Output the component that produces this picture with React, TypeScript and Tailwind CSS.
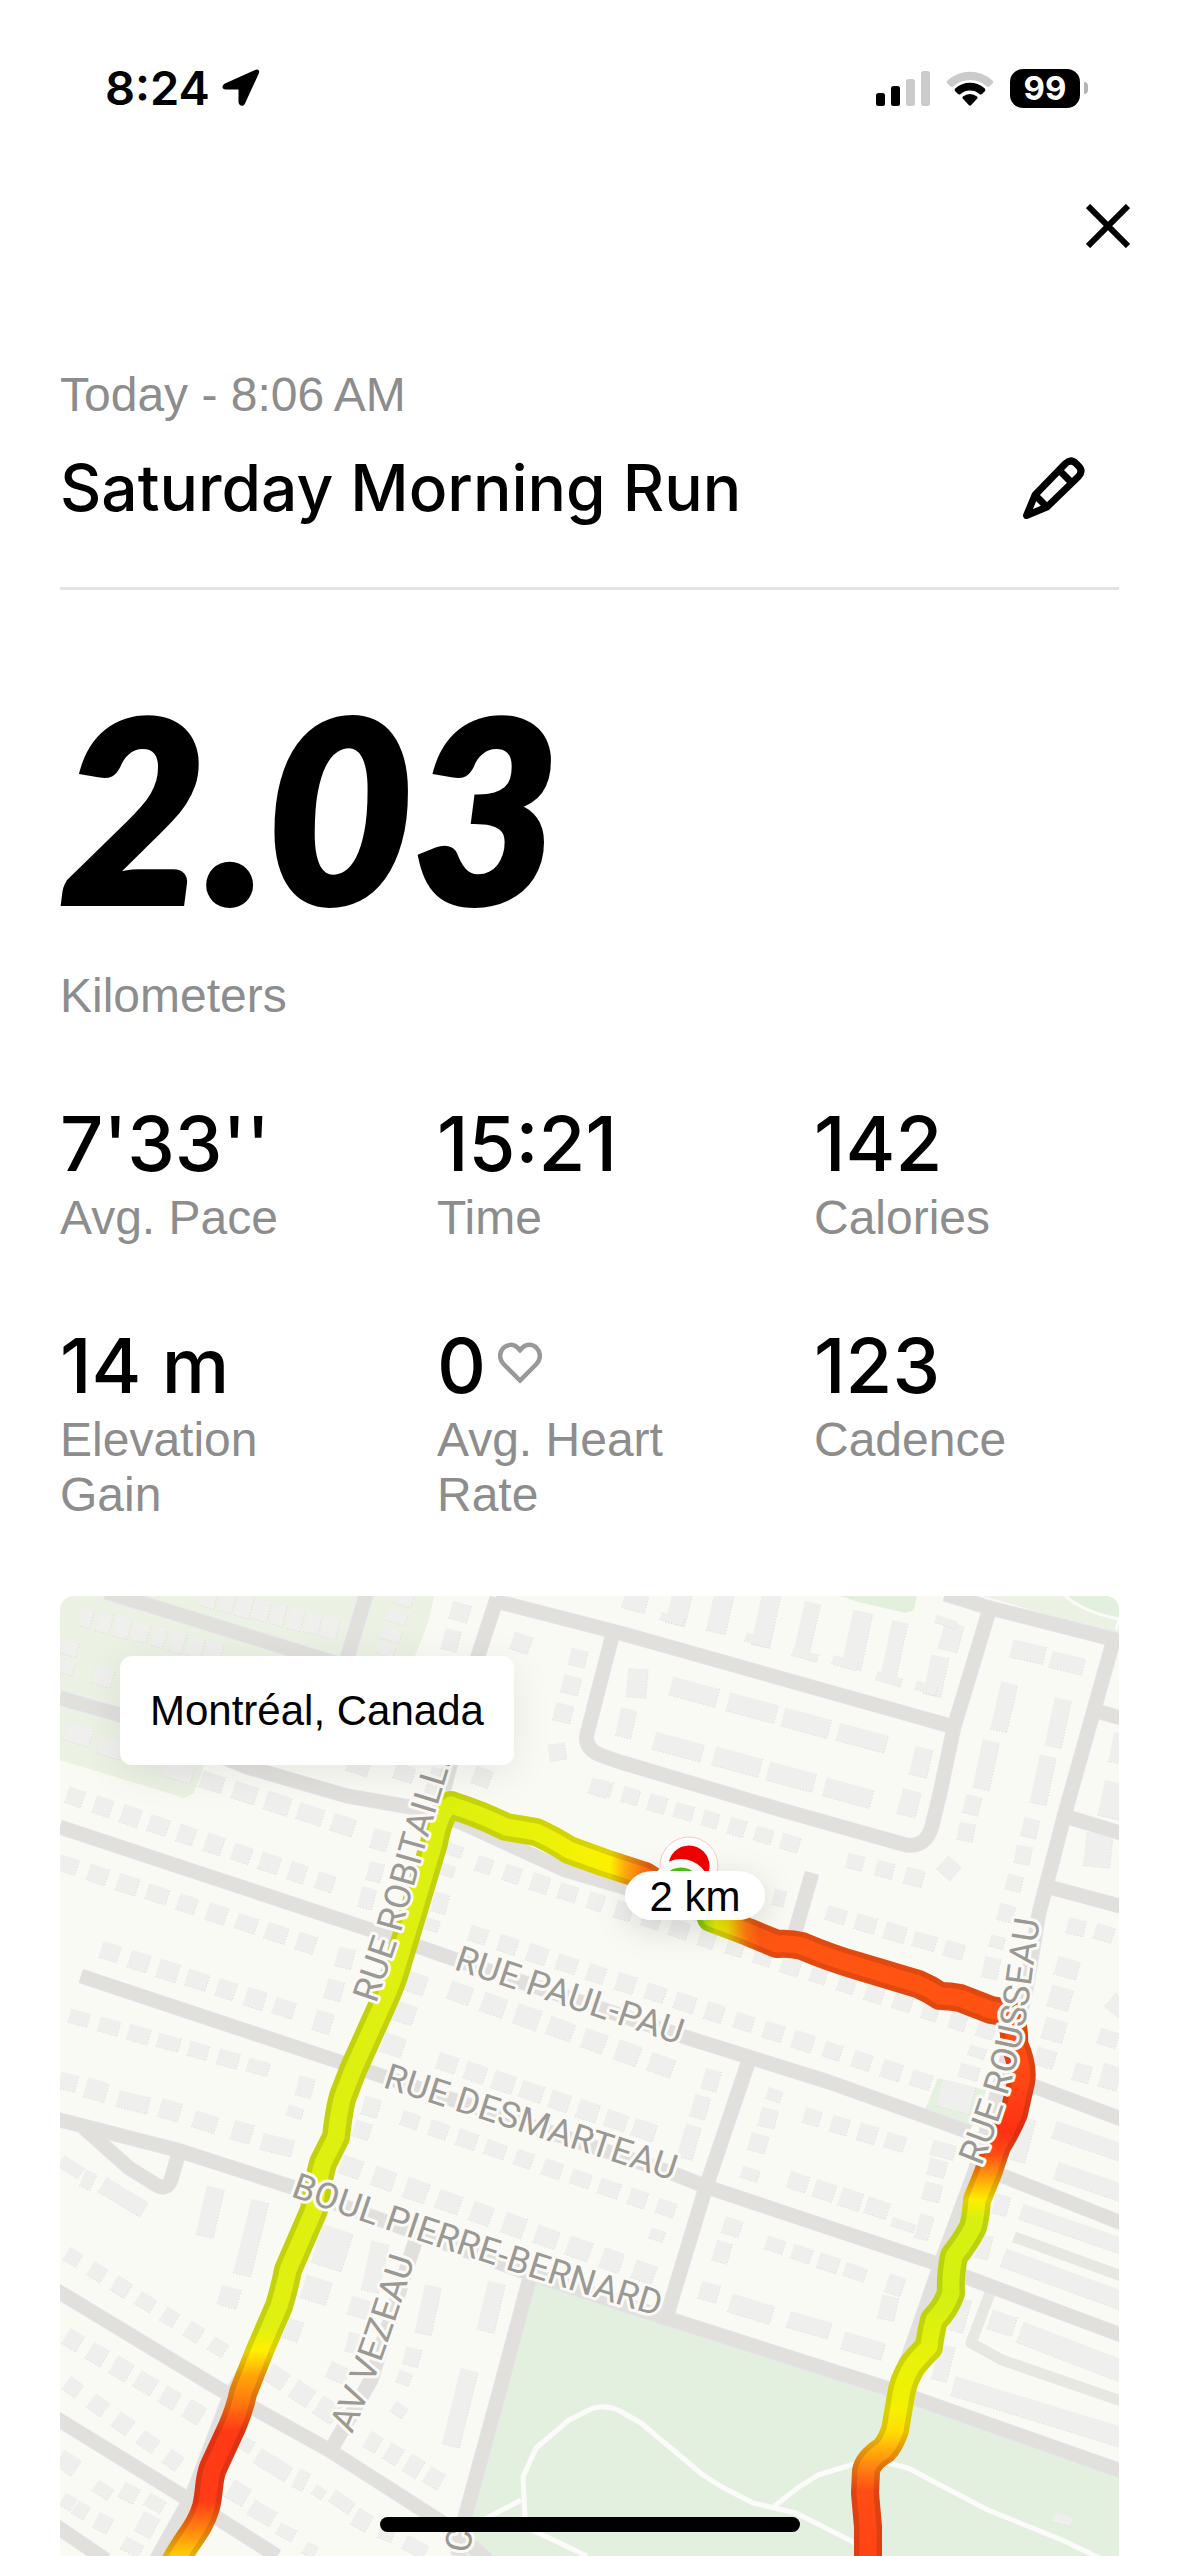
import type { ReactNode } from "react";

type Building = [cx: number, cy: number, w: number, h: number, angle: number];
type Row = [x1: number, y1: number, x2: number, y2: number, count: number, w: number, h: number];

const rows: Row[] = [
  [150, 2, 270, 32, 8, 14, 21],
  [26, 22, 154, 56, 8, 14, 20],
  [152, 186, 283, 229, 5, 24, 18],
  [15, 201, 265, 286, 10, 18, 18],
  [8, 269, 246, 347, 9, 20, 17],
  [50, 356, 224, 412, 7, 20, 18],
  [19, 422, 198, 471, 7, 21, 15],
  [424, 269, 926, 434, 19, 17, 17],
  [418, 339, 861, 484, 16, 19, 17],
  [400, 397, 601, 469, 7, 24, 20],
  [387, 467, 584, 534, 8, 21, 18],
  [350, 524, 606, 612, 10, 19, 16],
  [291, 571, 584, 676, 10, 22, 20],
  [217, 781, 267, 814, 3, 21, 20],
  [313, 846, 374, 882, 4, 15, 19],
  [13, 661, 158, 751, 7, 16, 16],
  [13, 744, 134, 816, 6, 18, 19],
  [13, 791, 113, 864, 5, 17, 17],
  [544, 192, 730, 247, 8, 17, 16],
  [795, 266, 854, 281, 3, 18, 16],
  [776, 319, 894, 354, 5, 21, 16],
  [752, 521, 835, 546, 4, 18, 17],
  [738, 586, 817, 612, 4, 21, 18],
  [715, 649, 795, 676, 4, 20, 15],
];

const buildings: Building[] = [
  [8, 52, 20, 14, 17], [6, 71, 16, 14, 17], [43, 81, 20, 18, 17],
  [19, 139, 26, 18, 17], [50, 152, 24, 18, 17], [119, 176, 28, 17, 17],
  [344, 4, 18, 12, 18], [337, 21, 20, 13, 18], [331, 39, 20, 12, 18], [326, 54, 18, 12, 18],
  [400, 16, 19, 18, 16], [391, 44, 16, 21, 14], [461, 47, 19, 18, 20],
  [518, 62, 17, 17, 14], [511, 89, 18, 18, 14], [503, 117, 18, 18, 14],
  [497, 156, 17, 17, -8], [422, 181, 18, 18, 20], [539, 192, 19, 16, 18],
  [320, 244, 17, 20, 16], [298, 171, 22, 14, 18], [344, 177, 20, 16, 18],
  [376, 182, 14, 20, 16], [372, 197, 16, 10, 16],
  [315, 276, 15, 19, 14], [307, 302, 15, 21, 14], [285, 362, 17, 20, 14],
  [274, 394, 17, 20, 16], [263, 426, 18, 21, 16],
  [394, 254, 17, 12, 18], [387, 274, 15, 12, 18], [380, 307, 15, 20, 14],
  [372, 329, 14, 12, 16], [355, 387, 22, 20, 18], [344, 417, 22, 20, 18], [333, 449, 22, 20, 18],
  [651, 484, 16, 21, 16], [640, 511, 16, 23, 16], [629, 546, 16, 34, 16],
  [311, 511, 17, 19, 16], [302, 534, 17, 17, 18], [597, 639, 15, 11, 18],
  [272, 652, 32, 40, 18], [256, 694, 27, 24, 18], [233, 734, 16, 21, 20],
  [315, 671, 18, 50, 12], [300, 712, 22, 19, 16], [294, 747, 15, 20, 14],
  [278, 777, 21, 17, 24], [368, 714, 17, 49, 12], [431, 711, 18, 50, 13],
  [352, 761, 16, 18, 14], [344, 782, 14, 13, 20], [400, 812, 18, 78, 14], [339, 814, 14, 12, 35],
  [8, 486, 18, 17, 14], [36, 494, 22, 20, 16], [73, 506, 32, 17, 14], [110, 514, 21, 19, 16],
  [145, 526, 24, 17, 18], [182, 536, 20, 20, 16], [217, 549, 32, 17, 14],
  [245, 491, 16, 20, 14], [235, 516, 16, 11, 18],
  [11, 571, 24, 13, 32], [28, 584, 12, 18, 24], [63, 601, 49, 17, 31],
  [150, 616, 18, 50, 13], [191, 642, 18, 76, 14], [169, 701, 20, 20, 16],
  [8, 867, 20, 19, 34], [43, 894, 18, 13, 34], [69, 897, 17, 17, 28], [95, 907, 19, 14, 30],
  [8, 906, 13, 14, 30], [21, 914, 14, 15, 32], [43, 927, 16, 17, 28], [72, 951, 20, 14, 28],
  [87, 929, 18, 22, 28], [187, 849, 12, 13, 30], [213, 869, 37, 17, 32], [241, 884, 12, 20, 26],
  [259, 896, 12, 11, 34], [282, 906, 24, 14, 34], [302, 924, 17, 19, 30], [178, 897, 20, 20, 30],
  [202, 917, 26, 17, 30], [226, 936, 18, 13, 28], [250, 954, 12, 13, 30], [355, 951, 24, 15, 28],
  [326, 938, 15, 13, 20],
  [575, 6, 24, 18, 15], [619, 12, 20, 34, 14], [612, 23, 24, 8, 16], [660, 17, 20, 40, 13],
  [706, 24, 19, 54, 12], [697, 44, 24, 9, 17], [747, 32, 16, 52, 13], [745, 59, 26, 8, 16],
  [797, 44, 20, 58, 12], [785, 67, 26, 9, 16], [834, 54, 16, 58, 12], [829, 83, 26, 9, 16],
  [876, 80, 18, 40, 12], [866, 92, 22, 9, 18], [891, 41, 20, 28, 15], [886, 26, 22, 8, 18],
  [968, 56, 34, 18, 13], [1007, 67, 34, 17, 14], [944, 111, 17, 49, 13], [998, 127, 17, 49, 12],
  [926, 169, 17, 49, 12], [983, 184, 17, 49, 12], [912, 209, 16, 19, 14], [906, 236, 16, 18, 10],
  [970, 232, 16, 19, 14], [963, 259, 16, 18, 10], [954, 287, 16, 16, 14], [946, 317, 16, 17, 14],
  [937, 346, 15, 12, 16], [931, 372, 16, 21, 12], [889, 272, 18, 18, 42],
  [577, 87, 20, 29, 5], [566, 127, 16, 29, 12],
  [634, 96, 48, 19, 15], [692, 112, 50, 19, 15], [746, 127, 48, 19, 15], [802, 142, 50, 18, 15],
  [618, 151, 50, 18, 15], [677, 166, 48, 19, 15], [731, 181, 48, 19, 15], [788, 197, 49, 19, 15],
  [861, 166, 18, 29, 13], [849, 207, 19, 26, 14], [719, 302, 12, 16, 14],
  [1057, 152, 12, 30, 12], [1052, 204, 22, 36, 12], [1038, 254, 27, 34, 6],
  [1016, 331, 18, 16, 14], [1044, 337, 19, 16, 18], [1007, 372, 23, 19, 16], [1000, 402, 22, 22, 16],
  [994, 434, 22, 22, 16], [1048, 442, 19, 16, 18], [985, 462, 20, 18, 18], [1022, 477, 17, 18, 16],
  [1050, 481, 19, 24, 16], [1057, 409, 18, 18, 40], [917, 456, 17, 11, 18], [909, 476, 20, 14, 16],
  [714, 499, 15, 12, 20], [708, 522, 17, 19, 14], [698, 547, 18, 18, 16], [690, 578, 18, 12, 18],
  [883, 554, 24, 15, 16], [877, 572, 18, 17, 14], [872, 596, 18, 18, 14], [843, 629, 24, 9, 18],
  [864, 631, 14, 25, 16], [672, 631, 18, 17, 18], [662, 656, 16, 21, 16], [835, 689, 17, 19, 18],
  [828, 712, 17, 24, 12], [649, 696, 19, 18, 16], [691, 713, 44, 19, 17], [749, 729, 43, 17, 16],
  [803, 750, 42, 18, 16], [896, 501, 34, 27, 14], [1028, 545, 72, 18, 19], [1030, 586, 72, 18, 19],
  [1012, 633, 108, 16, 19], [1005, 684, 132, 19, 20], [942, 727, 26, 20, 18],
  [1012, 756, 112, 22, 21], [982, 817, 186, 20, 17], [941, 609, 15, 20, 14], [924, 651, 13, 24, 14],
  [900, 719, 15, 34, 16], [883, 767, 16, 36, 14], [963, 544, 15, 44, 14], [1003, 924, 19, 9, 14],
];

const roads: string[] = [
  "M46 -4 L269 65 L405 105",
  "M307 -4 L286 66",
  "M437 2 L418 60 L390 170 L345 340 L293 470 L272 540 L212 725 L168 805 L132 900 L96 964",
  "M0 102 L60 119 L187 171 L287 200 L350 211 L400 226 L505 274 L560 290 L720 346 L945 412",
  "M0 231 L320 337 L391 362 L625 441 L769 486 L909 536",
  "M21 380 L280 466 L313 477 L612 577 L647 591 L872 666 L906 681 L1064 740",
  "M-4 523 L117 554 L232 591 L313 621 L468 677 L603 721 L826 792 L1064 876",
  "M24 532 L69 572 L98 590 Q107 594 111 584 L119 556",
  "M355 646 L311 784 L272 852",
  "M470 681 L439 797 L405 921 L398 960",
  "M-4 694 L161 794 L269 854 L383 927 L428 964",
  "M-4 822 L121 899 L217 960",
  "M-4 930 L46 964",
  "M435 5 L560 37 L894 131",
  "M930 12 L894 131 L880 197 L872 230 Q866 252 846 249 L725 215 L560 166 L540 159 Q524 152 527 138 L553 37",
  "M885 -2 L930 12 L1064 46",
  "M1053 46 L1005 217 L979 317 L965 400 L935 505 L915 575 L882 664 L840 785 L836 792",
  "M1040 116 L1064 123",
  "M1011 222 L1064 238",
  "M989 291 L1064 311",
  "M752 277 L734 340",
  "M688 467 L645 594 L607 719",
  "M968 488 L1064 524",
  "M938 578 L1064 628",
];

const leftLeg =
  "M115 966 C128 942 140 932 146 911 C150 895 148 885 153 872 L172 831 Q180 812 183 797 L200 754 L219 710 Q225 690 228 674 L254 614 Q258 585 263 567 L276 541 Q280 505 285 495 L293 474 L320 414 Q331 390 335 377 L357 304 L374 247 Q380 215 391 209";
const topFirst = "M391 209 Q420 218 446 231 Q460 233 476 236 Q492 243 509 254 L545 267 L585 280 L610 296";
const topSecond =
  "M651 322 L688 336 L717 348 Q730 347 742 350 Q770 362 798 370 L858 388 Q870 393 880 400 Q890 400 900 402 L931 414 L950 417";
const rightLeg =
  "M950 417 Q955 435 954 448 Q964 470 961 486 L954 517 Q948 532 937 550 L928 577 L917 604 Q916 620 913 631 Q906 645 894 660 Q890 680 891 697 Q886 712 874 724 Q870 740 869 751 Q858 762 852 770 Q843 785 841 799 L835 834 Q830 848 824 854 Q808 864 806 875 L805 897 L808 931 L808 966";

const segments = [
  { d: leftLeg, stroke: "url(#paceLeft)" },
  { d: topFirst, stroke: "url(#paceTop)" },
  { d: topSecond, stroke: "url(#paceTop)" },
  { d: rightLeg, stroke: "url(#paceRight)" },
];

const leftStops: [number, string][] = [
  [200, "#dcf00f"], [730, "#e0f010"], [755, "#fff000"], [780, "#ffa408"], [806, "#ff7a10"],
  [835, "#ff3a15"], [905, "#ff3c16"], [932, "#ff8010"], [960, "#ffd008"],
];
const topStops: [number, string][] = [
  [391, "#dcf00f"], [480, "#eaf208"], [550, "#fdf000"], [566, "#ffa80c"], [590, "#ff6412"],
  [640, "#9adf10"], [656, "#ecf008"], [668, "#f4dc04"], [686, "#ff7a12"], [700, "#ff5512"], [950, "#ff5212"],
];
const rightStops: [number, string][] = [
  [417, "#ff5212"], [490, "#ff4514"], [535, "#ff3014"], [558, "#ff4c14"], [580, "#ff9a0c"],
  [604, "#ffee00"], [622, "#d8f010"], [700, "#d4f012"], [760, "#e8f208"], [815, "#f4f000"],
  [836, "#ffdc04"], [868, "#ff8a10"], [895, "#ff4c14"], [960, "#ff4414"],
];

function Gradient({ id, stops, horizontal }: { id: string; stops: [number, string][]; horizontal?: boolean }) {
  const first = stops[0][0];
  const last = stops[stops.length - 1][0];
  return (
    <linearGradient
      id={id}
      gradientUnits="userSpaceOnUse"
      x1={horizontal ? first : 0}
      x2={horizontal ? last : 0}
      y1={horizontal ? 0 : first}
      y2={horizontal ? 0 : last}
    >
      {stops.map(([at, color]) => (
        <stop key={at} offset={(at - first) / (last - first)} stopColor={color} />
      ))}
    </linearGradient>
  );
}

function expandRow([x1, y1, x2, y2, count, w, h]: Row): Building[] {
  const angle = (Math.atan2(y2 - y1, x2 - x1) * 180) / Math.PI;
  return Array.from({ length: count }, (_, i): Building => {
    const t = i / (count - 1);
    return [x1 + (x2 - x1) * t, y1 + (y2 - y1) * t, w + ((i * 5) % 4) - 1, h + ((i * 7) % 3) - 1, angle];
  });
}

function Buildings() {
  const all = [...rows.flatMap(expandRow), ...buildings];
  return (
    <g>
      {all.map(([cx, cy, w, h, angle], i) => (
        <g key={i} transform={`translate(${cx} ${cy}) rotate(${angle})`}>
          <rect x={-w / 2} y={-h / 2} width={w} height={h} fill="#efefee" />
          <path
            d={`M${-w / 2} ${h / 2} H${w / 2} V${-h / 2}`}
            fill="none"
            stroke="#d6d6d3"
            strokeWidth="0.8"
            strokeDasharray="1 2"
          />
        </g>
      ))}
    </g>
  );
}

const streetLabels = [
  { name: "RUE ROBITAILLE", d: "M316 408 L342 332 L366 247 L389 172 L410 90" },
  { name: "RUE PAUL-PAU", d: "M393 373 L700 476" },
  { name: "RUE DESMARTEAU", d: "M322 491 L700 613" },
  { name: "BOUL PIERRE-BERNARD", d: "M230 600 Q420 668 650 736" },
  { name: "AV VEZEAU", d: "M292 838 Q325 765 366 626" },
  { name: "RUE ROUSSEAU", d: "M921 571 Q958 480 968 410 Q974 360 986 290" },
  { name: "C", d: "M409 958 L420 900" },
];

function RouteMap() {
  return (
    <svg viewBox="0 0 1059 960" className="block h-auto w-full" role="img" aria-label="Route map">
      <defs>
        <Gradient id="paceLeft" stops={leftStops} />
        <Gradient id="paceTop" stops={topStops} horizontal />
        <Gradient id="paceRight" stops={rightStops} />
        <filter id="pillShadow" x="-50%" y="-100%" width="200%" height="400%">
          <feDropShadow dx="0" dy="8" stdDeviation="16" floodColor="#000" floodOpacity="0.14" />
        </filter>
      </defs>
      <rect width="1059" height="960" fill="#fafaf5" />
      <g>
        <path d="M0 0 H374 L368 27 L355 60 L340 100 L145 165 L141 180 L133 198 L124 202 L0 164Z" fill="#ebf1e3" />
        <path d="M780 0 H857 L854 14 L846 17 L798 6Z" fill="#e3f0dd" />
        <path d="M924 0 H1059 V40Z" fill="#ebf1e3" />
        <path d="M1003 0 H1059 V22 L1027 15Z" fill="#e3f0dd" />
        <path d="M878 482 L926 494 L920 517 L909 536 L865 514Z" fill="#e4f1df" />
        <path d="M474 684 L603 724 L826 796 L1059 880 V960 H402 L412 921 L445 797Z" fill="#e4f0df" />
      </g>
      <g fill="none" stroke="#fbfbf9" strokeWidth="5" strokeLinejoin="round">
        <path d="M1003 -2 Q1022 16 1059 23 L1056 34" strokeWidth="3" />
        <path d="M425 923 L461 904" />
        <path d="M527 960 L472 934 L465 921 L463 881 L476 852 L509 824 L533 812 Q546 809 558 814 L581 827 L643 879 L662 891 L693 907 L736 917 L795 947" />
        <path d="M712 912 L739 891 L758 879 L791 869 L828 867 L848 872 L880 889 L928 914 L1002 944 L1040 962" />
      </g>
      <Buildings />
      <g fill="none" stroke="#e8e8e2" strokeWidth="11">
        <path d="M954 641 L1064 681" />
        <path d="M930 697 L911 747 L942 764 L1064 806" strokeLinejoin="round" />
      </g>
      <g fill="none" stroke="#e2e2ec" strokeWidth="15" strokeLinejoin="round">
        {roads.map((d) => (
          <path key={d} d={d} />
        ))}
      </g>
      <g fill="none" stroke="#e1e0dc" strokeWidth="13" strokeLinejoin="round">
        {roads.map((d) => (
          <path key={d} d={d} />
        ))}
      </g>
      <g fill="none" strokeLinecap="round" strokeLinejoin="round">
        {segments.map((s) => (
          <path key={s.d} d={s.d} stroke={s.stroke} strokeWidth="28" />
        ))}
        <path
          d={`${leftLeg} ${topFirst.replace("M", "L")} ${topSecond} ${rightLeg.replace("M", "L")}`}
          stroke="#000"
          strokeOpacity="0.12"
          strokeWidth="28"
        />
        {segments.map((s) => (
          <path key={s.d} d={s.d} stroke={s.stroke} strokeWidth="17" />
        ))}
      </g>
      <g
        className="font-['Roboto',sans-serif] text-[36px]"
        fill="#9b9993"
        stroke="#faf9f6"
        strokeWidth="6"
        strokeLinejoin="round"
        paintOrder="stroke"
      >
        {streetLabels.map(({ name, d }) => (
          <g key={name}>
            <path id={`street-${name.replace(/\W/g, "-")}`} d={d} fill="none" stroke="none" />
            <text>
              <textPath href={`#street-${name.replace(/\W/g, "-")}`}>{name}</textPath>
            </text>
          </g>
        ))}
      </g>
      <circle cx="629" cy="270" r="29" fill="#fff" stroke="#f5a3a3" strokeWidth="0.6" />
      <circle cx="629" cy="270" r="20.5" fill="#f00000" />
      <circle cx="621" cy="292" r="29" fill="#fff" />
      <circle cx="621" cy="292" r="20.5" fill="#4fc40e" />
      <rect x="565" y="275" width="140" height="49" rx="28" ry="24.5" fill="#fff" filter="url(#pillShadow)" />
      <text
        x="635"
        y="315"
        textAnchor="middle"
        className="font-['Liberation_Sans',sans-serif] text-[42px]"
        fill="#000"
      >
        2 km
      </text>
    </svg>
  );
}

function StatusBar() {
  return (
    <div className="flex h-[60px] items-center justify-between pr-[91px] pl-[105px]">
      <div className="flex items-center gap-3">
        <span className="font-['Inter',sans-serif] text-[47px] leading-[60px] font-semibold">8:24</span>
        <svg viewBox="0 0 38 38" className="size-[38px]" aria-hidden="true">
          <path d="M33 1 L3 14.5 C-1 17 0 20.5 4 20.5 L16.5 20.5 L16.5 33 C17 37.5 21.5 38 23 34.5 L37 4 C38 1.5 36 -.5 33 1Z" />
        </svg>
      </div>
      <div className="flex items-center gap-4">
        <svg viewBox="0 0 54 35" className="h-[35px] w-[54px]" aria-hidden="true">
          <rect x="0" y="22" width="9" height="13" rx="2.5" />
          <rect x="15" y="15" width="9" height="20" rx="2.5" />
          <rect x="30" y="8" width="9" height="27" rx="2.5" fill="#cbcbcb" />
          <rect x="45" y="0" width="9" height="35" rx="2.5" fill="#cbcbcb" />
        </svg>
        <svg viewBox="0 0 48 35" className="h-[35px] w-12" aria-hidden="true">
          <path d="M1.500 9.500 Q0 11 1.500 12.500 L4.500 15.500 Q6 16.500 7.500 15.200 A25 25 0 0 1 40.500 15.200 Q42 16.500 43.500 15.500 L46.500 12.500 Q48 11 46.500 9.500 A33 33 0 0 0 1.500 9.500Z" fill="#cbcbcb" />
          <path d="M9.200 17.500 Q8 19 9.200 20.200 L12 23 Q13.200 24 14.700 22.900 A14.500 14.500 0 0 1 33.300 22.900 Q34.800 24 36 23 L38.800 20.200 Q40 19 38.800 17.500 A22 22 0 0 0 9.200 17.500Z" />
          <path d="M17 25.500 Q15.800 26.800 17.200 28.100 L23 34.300 Q24 35.200 25 34.300 L30.800 28.100 Q32.200 26.800 31 25.500 A11 11 0 0 0 17 25.500Z" />
        </svg>
        <div className="flex items-center gap-1">
          <span className="flex h-[39px] w-[70px] items-center justify-center rounded-[13px] bg-black font-['Inter',sans-serif] text-[33px] leading-none font-bold text-white">
            99
          </span>
          <span className="h-3 w-1 rounded-r-full bg-[#b5b5b5]" />
        </div>
      </div>
    </div>
  );
}

function Stat({ value, label, icon }: { value: string; label: string; icon?: ReactNode }) {
  return (
    <div className="flex flex-col gap-[7px]">
      <dt className="order-last text-[48px] leading-[55px] text-[#8d8d8d]">{label}</dt>
      <dd className="flex items-center gap-3 font-['Inter',sans-serif] text-[76px] leading-[80px] font-medium">
        {value}
        {icon}
      </dd>
    </div>
  );
}

function HeartIcon() {
  return (
    <svg viewBox="0 0 44 42" className="mb-1 h-[42px] w-11" fill="none" stroke="#999" strokeWidth="4.5" aria-hidden="true">
      <path d="M22 38.500 L5.500 22 C1 17.500 1 10 5.500 5.800 C9.800 1.800 15.800 2 19.500 5.700 L22 8.200 L24.500 5.700 C28.200 2 34.200 1.800 38.500 5.800 C43 10 43 17.500 38.500 22Z" />
    </svg>
  );
}

export default function App() {
  return (
    <main className="flex min-h-screen flex-col bg-white pt-[58px] font-['Liberation_Sans',sans-serif] text-black">
      <StatusBar />
      <div className="mt-[60px] flex justify-end pr-[23px]">
        <button type="button" aria-label="Close" className="flex size-24 items-center justify-center">
          <svg viewBox="0 0 44 44" className="size-11" fill="none" stroke="currentColor" strokeWidth="6">
            <path d="M2 2 L42 42 M42 2 L2 42" />
          </svg>
        </button>
      </div>

      <div className="px-[60px]">
        <header className="mt-[93px] border-b-[3px] border-[#e4e4e4] pb-[59px]">
          <p className="text-[48px] leading-[55px] text-[#8d8d8d]">Today - 8:06{"\u2009"}AM</p>
          <div className="mt-[26px] flex items-center justify-between pr-[34px]">
            <h1 className="font-['Inter',sans-serif] text-[64px] leading-[80px] font-medium">Saturday Morning Run</h1>
            <button type="button" aria-label="Edit name">
              <svg
                viewBox="0 0 62 62"
                className="size-[62px]"
                fill="none"
                stroke="currentColor"
                strokeWidth="7"
                strokeLinejoin="round"
              >
                <path d="M3.500 58.500 L12 38 L42.500 6.500 Q48 1.500 53 6.500 L55.500 9 Q60.500 14 55.500 19.500 L24 50Z" />
                <path d="M36 13 L49 26 M12 38 L24 50" />
              </svg>
            </button>
          </div>
        </header>

        <section className="mt-[88px]">
          <p className="font-['Lato',sans-serif] text-[252px] leading-[256px] font-black italic [-webkit-text-stroke:6px_#000]">
            2.03
          </p>
          <p className="mt-[34px] text-[48px] leading-[55px] text-[#8d8d8d]">Kilometers</p>
        </section>

        <dl className="mt-20 grid grid-cols-3 gap-x-[72px] gap-y-20">
          <Stat value="7'33''" label="Avg. Pace" />
          <Stat value="15:21" label="Time" />
          <Stat value="142" label="Calories" />
          <Stat value="14 m" label="Elevation Gain" />
          <Stat value="0" label="Avg. Heart Rate" icon={<HeartIcon />} />
          <Stat value="123" label="Cadence" />
        </dl>

        <section className="relative mt-[74px] overflow-hidden rounded-t-[14px]">
          <RouteMap />
          <div className="absolute top-[60px] left-[60px] rounded-[12px] bg-white px-[30px] py-[27px] text-[42px] leading-[55px] shadow-[0_8px_40px_rgba(0,0,0,0.08)]">
            Montréal, Canada
          </div>
        </section>
      </div>
      <div className="fixed bottom-6 left-1/2 h-[15px] w-[420px] -translate-x-1/2 rounded-full bg-black" />
    </main>
  );
}
